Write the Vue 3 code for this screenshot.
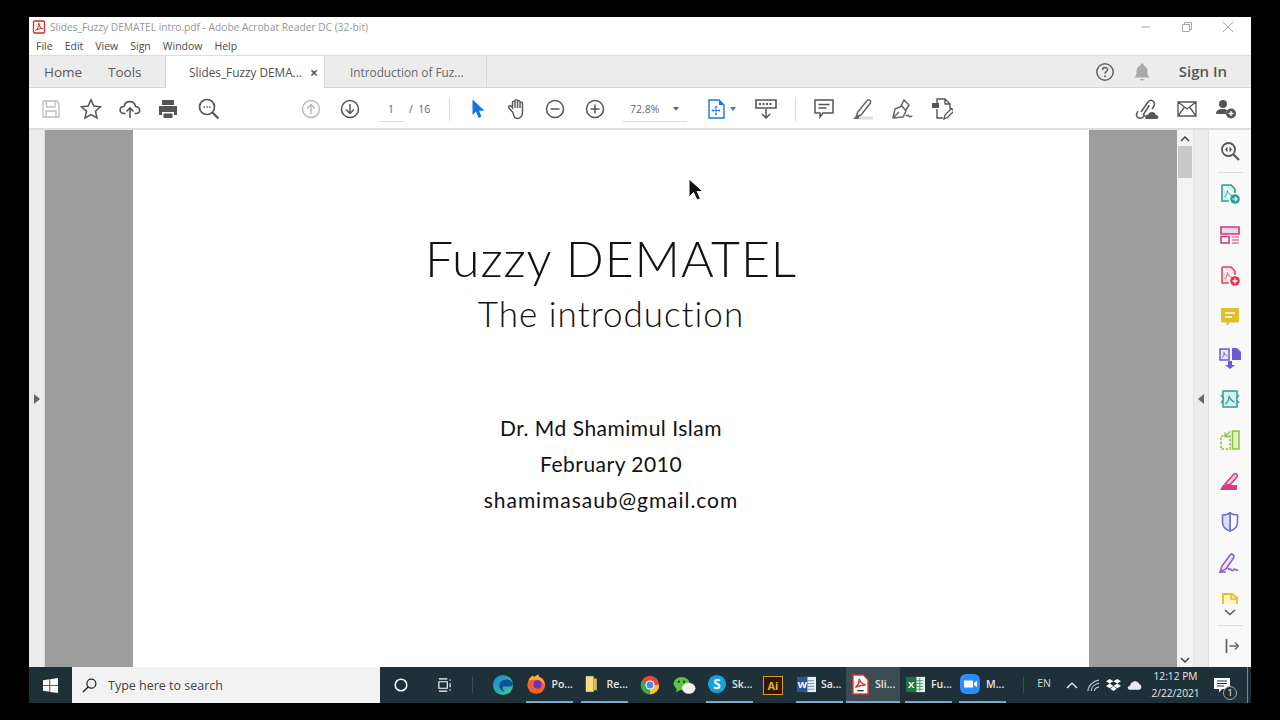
<template>
  <div class="screen">
    <div class="window">
      <!-- title bar -->
      <div class="titlebar">
        <svg class="app-icon" viewBox="0 0 14 14" width="14" height="14">
          <rect x="1.5" y="1" width="11" height="12" rx="1" fill="#fff" stroke="#c8322c" stroke-width="1.3" />
          <path d="M3.5 10.5C6 9 7 6 6.6 3.6 6.4 2.8 7.6 3 7.4 4.4 7.2 6.5 8.5 8 10.6 8.6 8.5 8.4 5.5 9 3.5 10.5Z" fill="none" stroke="#c8322c" stroke-width="1" />
        </svg>
        <span class="title-text">Slides_Fuzzy DEMATEL intro.pdf - Adobe Acrobat Reader DC (32-bit)</span>
        <div class="win-controls">
          <svg viewBox="0 0 12 12" width="12" height="12"><path d="M1 6h9" stroke="#a8a8a8" fill="none" /></svg>
          <svg viewBox="0 0 12 12" width="12" height="12"><path d="M1.5 3.5h7v7h-7zM3.5 3.5v-2h7v7h-2" stroke="#a8a8a8" fill="none" /></svg>
          <svg viewBox="0 0 12 12" width="12" height="12"><path d="M1 1l10 10M11 1L1 11" stroke="#a8a8a8" fill="none" /></svg>
        </div>
      </div>

      <!-- menu -->
      <div class="menubar">
        <span v-for="m in menus" :key="m">{{ m }}</span>
      </div>

      <!-- tabs -->
      <div class="tabbar">
        <span class="tab-link home">Home</span>
        <span class="tab-link tools">Tools</span>
        <div class="tab active">
          <span>Slides_Fuzzy DEMA...</span>
          <span class="tab-close">×</span>
        </div>
        <div class="tab other"><span>Introduction of Fuz...</span></div>
        <div class="tab-right">
          <svg viewBox="0 0 20 20" width="20" height="20">
            <circle cx="10" cy="10" r="8.2" fill="none" stroke="#666" stroke-width="1.5" />
            <path d="M7.6 8c0-3.2 4.9-3.2 4.9-.2 0 1.9-2.5 1.8-2.5 3.9" fill="none" stroke="#666" stroke-width="1.5" />
            <circle cx="10" cy="14.2" r="1" fill="#666" />
          </svg>
          <svg class="bell" viewBox="0 0 18 20" width="18" height="20">
            <path d="M1.5 15.5c2-2 2-3.500 2-6.500 0-3 2-5 4-5.500C7.500 2 8 1.500 9 1.500s1.500.5 1.500 2c2 .5 4 2.500 4 5.500 0 3 0 4.500 2 6.500zM7 17h4c0 2-4 2-4 0z" fill="#a9a9a9" />
          </svg>
          <span class="signin">Sign In</span>
        </div>
      </div>

      <!-- toolbar -->
      <div class="toolbar">
        <svg class="tb save" viewBox="0 0 20 20" width="20" height="20">
          <path d="M2 2h14l2 2v14H2zM5.500 2v6h8.500V2M5 18v-6h10v6" fill="none" stroke="#bdbdbd" stroke-width="1.3" />
        </svg>
        <svg class="tb star" viewBox="0 0 22 22" width="22" height="22">
          <path d="M11 1.800l2.800 6.300 6.800.7-5.100 4.500 1.500 6.700L11 16.500l-6 3.500 1.500-6.700L1.400 8.800l6.800-.7z" fill="none" stroke="#555" stroke-width="1.500" />
        </svg>
        <svg class="tb cloud" viewBox="0 0 22 20" width="22" height="20">
          <path d="M6.500 14.500H5.500C-.5 14.500 0 7.500 5 7.500 6.500 1 15.500 1 16.500 7.500c5 .2 6 7 .5 7h-1.500M11 19V9M7.500 12.500L11 9l3.500 3.500" fill="none" stroke="#555" stroke-width="1.600" />
        </svg>
        <svg class="tb print" viewBox="0 0 20 20" width="20" height="20">
          <path d="M4 1h12v5H4zM1 7h18v9h-3v-3H4v3H1zM5.500 14.500h9V19h-9z" fill="#555" />
        </svg>
        <svg class="tb find" viewBox="0 0 22 22" width="22" height="22">
          <circle cx="9" cy="9" r="7.500" fill="none" stroke="#555" stroke-width="1.700" />
          <path d="M14.500 14.500l6 6" stroke="#555" stroke-width="2.200" />
          <path d="M5.500 9h1.500M8.300 9h1.500M11 9h1.500" stroke="#555" stroke-width="1.400" />
        </svg>
        <svg class="tb page-up" viewBox="0 0 20 20" width="20" height="20">
          <circle cx="10" cy="10" r="8.500" fill="none" stroke="#bbb" stroke-width="1.500" />
          <path d="M10 15V5.500M6 9.500l4-4 4 4" fill="none" stroke="#bbb" stroke-width="1.500" />
        </svg>
        <svg class="tb page-down" viewBox="0 0 20 20" width="20" height="20">
          <circle cx="10" cy="10" r="8.500" fill="none" stroke="#555" stroke-width="1.500" />
          <path d="M10 5v9.500M6 10.500l4 4 4-4" fill="none" stroke="#555" stroke-width="1.500" />
        </svg>
        <div class="page-num"><span class="cur">1</span><span class="total">/&nbsp;&nbsp;16</span></div>
        <div class="sep sep1"></div>
        <svg class="tb pointer" viewBox="0 0 14 20" width="14" height="20">
          <path d="M1.500 .5v15.500l3.500-3.500 2.500 6.500 3-1.200-2.500-6H13.500z" fill="#1473e6" />
        </svg>
        <svg class="tb hand" viewBox="0 0 20 22" width="20" height="22">
          <path d="M5.500 14L2 10c-1.200-1.500.8-3 2-1.700l1.500 1.700V4.500c0-1.800 2.500-1.800 2.500 0V3c0-1.800 2.500-1.800 2.500 0v1c0-1.800 2.500-1.800 2.500 0v1.500c0-1.800 2.500-1.800 2.500 0V14c0 4-2 6.500-5.500 6.500S7.500 18 5.500 14zM8 4.500V10M10.500 3v7M13 4v6" fill="none" stroke="#555" stroke-width="1.400" />
        </svg>
        <svg class="tb zoom-out" viewBox="0 0 20 20" width="20" height="20">
          <circle cx="10" cy="10" r="8.500" fill="none" stroke="#555" stroke-width="1.500" />
          <path d="M5.500 10h9" stroke="#555" stroke-width="1.500" />
        </svg>
        <svg class="tb zoom-in" viewBox="0 0 20 20" width="20" height="20">
          <circle cx="10" cy="10" r="8.500" fill="none" stroke="#555" stroke-width="1.500" />
          <path d="M5.500 10h9M10 5.500v9" stroke="#555" stroke-width="1.500" />
        </svg>
        <div class="zoom-box"><span>72.8%</span><i class="caret"></i></div>
        <svg class="tb fit" viewBox="0 0 17 20" width="17" height="20">
          <path d="M1 1h10l5 5v13H1z" fill="#fff" stroke="#1473e6" stroke-width="1.400" />
          <path d="M11 1v5h5z" fill="#1473e6" />
          <path d="M8 7v9M4 11.500h8M6.800 8.500L8 7l1.200 1.500M6.800 14.500L8 16l1.200-1.500M5.300 10.200L4 11.500l1.300 1.300M10.700 10.200l1.300 1.300-1.300 1.300" fill="none" stroke="#1473e6" stroke-width=".9" />
        </svg>
        <i class="caret blue"></i>
        <svg class="tb scroll-mode" viewBox="0 0 22 20" width="22" height="20">
          <path d="M1 1h20v8H1z" fill="none" stroke="#555" stroke-width="1.600" />
          <path d="M4 5h14" stroke="#555" stroke-width="2" stroke-dasharray="2 1.500" />
          <path d="M11 10v9M7 15l4 4 4-4" fill="none" stroke="#555" stroke-width="1.500" />
        </svg>
        <div class="sep sep2"></div>
        <svg class="tb comment" viewBox="0 0 20 20" width="20" height="20">
          <path d="M1 1h18v13H9l-3 4v-4H1zM4.500 5.500h11M4.500 9h8" fill="none" stroke="#555" stroke-width="1.500" />
        </svg>
        <svg class="tb highlight" viewBox="0 0 22 22" width="22" height="22">
          <path d="M6 20h15" stroke="#ddd" stroke-width="3" />
          <path d="M5.500 14.500L15.500 2c1.500-1 4 1 3 3L9 17l-4.500 1z" fill="none" stroke="#666" stroke-width="1.500" />
          <path d="M1 21l3.500-3.500h3.500l-1.500 3.500z" fill="#666" />
        </svg>
        <svg class="tb sign-pen" viewBox="0 0 22 22" width="22" height="22">
          <path d="M2 20l2-9 7-3 4 5-3 6zM2 20l6-6M10 8l3-6 5 5-3 5M15 17c1 2 2-1 3 1s2-1 3 1" fill="none" stroke="#666" stroke-width="1.500" />
        </svg>
        <svg class="tb more-tools" viewBox="0 0 22 22" width="22" height="22">
          <path d="M6 5V1h8l5 5v5M14 1v5h5M6 11v9h6" fill="none" stroke="#555" stroke-width="1.400" />
          <path d="M1 5h7v5H1z" fill="#555" />
          <path d="M13 21l1-4 6.500-6.500 2.500 2.500-6.500 6.500z" fill="#fff" stroke="#555" stroke-width="1.300" />
        </svg>
        <div class="toolbar-right">
          <svg viewBox="0 0 24 22" width="24" height="22">
            <path d="M3 13l-1 2c-2 4 3 7 6 4l2-2M13 9l1-2M6 14L13 4c3-4 8 0 6 4l-2 3M8 17l6-9" fill="none" stroke="#555" stroke-width="1.500" />
            <path d="M11 21c-2-2 0-5 2-4 1-4 7-4 8 0 3 0 3 4 1 4z" fill="#555" />
          </svg>
          <svg viewBox="0 0 20 16" width="20" height="16">
            <path d="M1 1h18v14H1zM1 1l9 7 9-7M1 15l6.500-9M19 15l-6.500-9" fill="none" stroke="#555" stroke-width="1.300" />
          </svg>
          <svg viewBox="0 0 22 20" width="22" height="20">
            <circle cx="8" cy="5" r="4" fill="#555" />
            <path d="M1 15c0-4 3-5 7-5 2 0 3 .5 4 1-1 2-1 3-1 4z" fill="#555" />
            <circle cx="16" cy="14.500" r="5" fill="#555" />
            <path d="M13.500 14.500h5M16 12v5" stroke="#fff" stroke-width="1.300" />
          </svg>
        </div>
      </div>

      <!-- document area -->
      <div class="doc-area">
        <div class="nav-strip"><i class="arrow right"></i></div>
        <div class="gray-col"></div>
        <div class="page">
          <h1>Fuzzy DEMATEL</h1>
          <h2>The introduction</h2>
          <p class="author">Dr. Md Shamimul Islam</p>
          <p>February 2010</p>
          <p class="email">shamimasaub@gmail.com</p>
        </div>
        <div class="gray-col"></div>
        <div class="scrollbar">
          <svg viewBox="0 0 10 6" width="10" height="6"><path d="M1 5l4-4 4 4" fill="none" stroke="#444" stroke-width="1.500" /></svg>
          <div class="thumb"></div>
          <svg class="down" viewBox="0 0 10 6" width="10" height="6"><path d="M1 1l4 4 4-4" fill="none" stroke="#444" stroke-width="1.500" /></svg>
        </div>
        <div class="collapse-col"><i class="arrow left"></i></div>
        <div class="rail">
          <svg class="rail-zoom" viewBox="0 0 20 20" width="20" height="20">
            <circle cx="8.500" cy="8.500" r="6.500" fill="none" stroke="#555" stroke-width="1.800" />
            <path d="M13.500 13.500l5.500 5.500" stroke="#555" stroke-width="2.200" />
            <path d="M7.500 5.500L5 8.500l2.500 3zM9.500 5.500l2.500 3-2.500 3z" fill="#555" />
          </svg>
          <div class="rail-line"></div>
          <div class="rail-icons">
            <svg viewBox="0 0 20 20" width="20" height="20">
              <path d="M2 1h9l4 4v4M2 1v16h7" fill="#d5efec" stroke="#2d9e92" stroke-width="1.600" />
              <path d="M4.500 13c2-1.500 3-4 2.800-6.500 1 3 2.500 4.500 5 5" fill="none" stroke="#2d9e92" />
              <circle cx="15" cy="15" r="4.800" fill="#2d9e92" />
              <path d="M12.500 15h4.500M15 13l2 2-2 2" fill="none" stroke="#fff" stroke-width="1.200" />
            </svg>
            <svg viewBox="0 0 20 18" width="20" height="18">
              <path d="M1 1h18v7H1z" fill="#f4d6e6" stroke="#d1367c" stroke-width="1.600" />
              <path d="M1 10.500h8v6.500H1z" fill="#fff" stroke="#d1367c" stroke-width="1.600" />
              <path d="M12 11h7M12 14h7M12 17h7" stroke="#d1367c" />
            </svg>
            <svg viewBox="0 0 20 20" width="20" height="20">
              <path d="M2 1h9l4 4v4M2 1v16h7" fill="#fbdfe2" stroke="#e0475e" stroke-width="1.600" />
              <path d="M4.500 13c2-1.500 3-4 2.800-6.500 1 3 2.500 4.500 5 5" fill="none" stroke="#e0475e" />
              <circle cx="15" cy="15" r="4.800" fill="#e0334c" />
              <path d="M12.500 15h5M15 12.500v5" stroke="#fff" stroke-width="1.300" />
            </svg>
            <svg viewBox="0 0 20 20" width="20" height="20">
              <path d="M2 1h16a1.500 1.500 0 0 1 1 1.500V14a1.500 1.500 0 0 1-1 1.500H10l-3.500 3.500v-3.500H2A1.500 1.500 0 0 1 1 14V2.500A1.500 1.500 0 0 1 2 1z" fill="#e0bf2b" />
              <path d="M5 6h10M5 10h7" stroke="#fff" stroke-width="1.500" />
            </svg>
            <svg viewBox="0 0 22 22" width="22" height="22">
              <path d="M1 2h9v11H1z" fill="#e9e6fb" stroke="#6a5ad8" stroke-width="1.500" />
              <path d="M3 10.500c1.500-1 2.500-3 2-5 .8 2 2 3 3.500 3.500" fill="none" stroke="#6a5ad8" />
              <path d="M13 1h5l4 4v8h-9z" fill="#6a5ad8" />
              <path d="M9 14h4v4h3l-5 4-5-4h3z" fill="#6a5ad8" />
            </svg>
            <svg viewBox="0 0 22 20" width="22" height="20">
              <path d="M4 2h14v16H4z" fill="#d5efec" stroke="#2d9e92" stroke-width="1.500" />
              <path d="M6.500 15c2.500-2 3.500-5 3.500-8 1 3.500 2.500 5 5.500 6" fill="none" stroke="#2d9e92" stroke-width="1.200" />
              <path d="M2 6l2.500 4L2 14M20 6l-2.500 4L20 14" fill="#f7f7f7" stroke="#2d9e92" stroke-width="1.300" />
            </svg>
            <svg viewBox="0 0 20 20" width="20" height="20">
              <path d="M12.500 1H19v18h-6.500z" fill="#e0f2c4" stroke="#8cc63f" stroke-width="1.600" />
              <path d="M1 6h9v13H1z" fill="none" stroke="#8cc63f" stroke-width="1.600" stroke-dasharray="2.500 1.500" />
              <path d="M10 1.500L5 6.500M5 2.500v4h4" fill="none" stroke="#8cc63f" stroke-width="1.500" />
            </svg>
            <svg viewBox="0 0 20 18" width="20" height="18">
              <path d="M0 18l3-5h14v5z" fill="#d83a84" />
              <path d="M5 12L14 2c1.500-1.500 4.500 1 3 3l-7 8z" fill="#f3c4da" stroke="#d83a84" stroke-width="1.500" />
            </svg>
            <svg viewBox="0 0 18 20" width="18" height="20">
              <path d="M9 1c2 1.500 5 2 7.500 2v7c0 5-4 8-7.500 9z" fill="#fff" stroke="#6a6ed8" stroke-width="1.600" />
              <path d="M9 1C7 2.500 4 3 1.500 3v7c0 5 4 8 7.500 9z" fill="#dadcf8" stroke="#6a6ed8" stroke-width="1.600" />
            </svg>
            <svg viewBox="0 0 22 20" width="22" height="20">
              <path d="M1 19l2-6 8-11c2-2 5 .5 3.500 3L7 16z" fill="#f0e6fb" stroke="#8e5cd9" stroke-width="1.600" />
              <path d="M1 19h6M9 15c1 3 2 0 3 1.500s2 1.500 3 0 2 1.500 4 .5" fill="none" stroke="#8e5cd9" stroke-width="1.600" />
            </svg>
          </div>
          <div class="rail-cut">
            <svg viewBox="0 0 16 12" width="16" height="12">
              <path d="M1 12V1h9l5 4v7" fill="#fdf3c0" stroke="#e5bd1f" stroke-width="1.800" />
              <path d="M9 1v5h6" fill="none" stroke="#e5bd1f" stroke-width="1.500" />
            </svg>
          </div>
          <svg class="rail-more" viewBox="0 0 12 7" width="12" height="7"><path d="M1 1l5 4.500L11 1" fill="none" stroke="#555" stroke-width="1.500" /></svg>
          <div class="rail-line bottom"></div>
          <svg class="rail-expand" viewBox="0 0 14 14" width="14" height="14">
            <path d="M1.500 0v14" stroke="#666" stroke-width="1.800" />
            <path d="M4.500 7h9M10 3.500L13.500 7 10 10.500" fill="none" stroke="#666" stroke-width="1.500" />
          </svg>
        </div>
        <!-- mouse pointer on top of the page -->
        <svg class="cursor" viewBox="0 0 16 24" width="16" height="24">
          <path d="M1 1v18l4.500-4.500L9 22l3.500-1.500L9 13.500h6z" fill="#111" stroke="#fff" stroke-width="1" />
        </svg>
      </div>
    </div>

    <!-- taskbar -->
    <div class="taskbar">
      <div class="start">
        <svg viewBox="0 0 16 16" width="15" height="15">
          <path d="M0 2.300l6.800-1v6.300H0zM7.700 1.200L16 0v7.600H7.700zM0 8.400h6.800v6.300L0 13.700zM7.700 8.400H16V16l-8.300-1.200z" fill="#fff" />
        </svg>
      </div>
      <div class="search">
        <svg viewBox="0 0 16 16" width="15" height="15">
          <circle cx="10" cy="6" r="4.800" fill="none" stroke="#222" stroke-width="1.300" />
          <path d="M6.500 9.500L1 15" stroke="#222" stroke-width="1.500" />
        </svg>
        <span>Type here to search</span>
      </div>
      <div class="task-cortana">
        <svg viewBox="0 0 14 14" width="14" height="14"><circle cx="7" cy="7" r="5.800" fill="none" stroke="#fff" stroke-width="1.500" /></svg>
      </div>
      <div class="task-view">
        <svg viewBox="0 0 16 14" width="15" height="14">
          <path d="M2 .5h9M2 13.500h9M2 3.500h9v7H2zM14 1v1.500M14 5v4.500M14 11.500V13" fill="none" stroke="#fff" stroke-width="1.200" />
        </svg>
      </div>
      <div class="task-sep apps-sep"></div>

      <div class="task edge">
        <svg viewBox="0 0 24 24" width="22" height="22">
          <defs>
            <linearGradient id="edgeGrad" x1="0" y1="0" x2="1" y2="1">
              <stop offset="0" stop-color="#1a86d8" />
              <stop offset="1" stop-color="#39d08a" />
            </linearGradient>
          </defs>
          <circle cx="12" cy="12" r="11" fill="url(#edgeGrad)" />
          <path d="M23 12c0-4-4-6-7-6-5 0-8 3-8 7 0 4 3 6 6 6-2-1-3-3-2-5 1-1 9 1 11-2z" fill="#124f9c" />
        </svg>
      </div>
      <div class="task open firefox">
        <svg viewBox="0 0 24 24" width="21" height="22">
          <circle cx="12" cy="13" r="10.500" fill="#f0612f" />
          <path d="M3 8c1-3 3-5 5-6 0 1 1 2 2 2 1-1 3-3 5-3-1 2 0 3 2 4 3 2 5 5 5 9-2-4-5-7-9-7-4 0-7 0-10 1z" fill="#fbb03b" />
          <circle cx="13.500" cy="12.500" r="4.800" fill="#6b2fc2" />
        </svg>
        <span>Po...</span>
      </div>
      <div class="task open files">
        <svg viewBox="0 0 16 22" width="13" height="20">
          <path d="M1 1h10v20H1z" fill="#f3dc82" />
          <path d="M11 4h4v15h-4z" fill="#d9b950" />
        </svg>
        <span>Re...</span>
      </div>
      <div class="task chrome">
        <svg viewBox="0 0 24 24" width="20" height="20">
          <circle cx="12" cy="12" r="11" fill="#e8483c" />
          <path d="M12 12L2.500 6.500A11 11 0 0 0 12 23z" fill="#3aa757" />
          <path d="M12 12h11a11 11 0 0 1-11 11z" fill="#f6c22d" />
          <circle cx="12" cy="12" r="5.500" fill="#fff" />
          <circle cx="12" cy="12" r="4.200" fill="#4a8ce8" />
        </svg>
      </div>
      <div class="task wechat">
        <svg viewBox="0 0 24 20" width="23" height="19">
          <ellipse cx="9" cy="8" rx="8.500" ry="7" fill="#5fc443" />
          <path d="M4 13l-1 4 5-2.500z" fill="#5fc443" />
          <ellipse cx="16.500" cy="13" rx="7" ry="5.800" fill="#f2f2f2" />
          <circle cx="6" cy="6" r="1.200" fill="#1f3138" />
          <circle cx="11.500" cy="6" r="1.200" fill="#1f3138" />
        </svg>
      </div>
      <div class="task open skype">
        <svg viewBox="0 0 22 22" width="20" height="20">
          <circle cx="11" cy="11" r="10" fill="#15a3e0" />
          <text x="11" y="16" text-anchor="middle" class="skype-s">S</text>
        </svg>
        <span>Sk...</span>
      </div>
      <div class="task ai">
        <div class="ai-box">Ai</div>
      </div>
      <div class="task open word">
        <svg viewBox="0 0 22 20" width="21" height="19">
          <path d="M9 2h12v16H9z" fill="#e8eef8" />
          <path d="M12 6h7M12 9h7M12 12h7M12 15h7" stroke="#6f8fc2" />
          <path d="M1 2h11v16H1z" fill="#2b579a" />
          <text x="6.500" y="14" text-anchor="middle" class="doc-letter">W</text>
        </svg>
        <span>Sa...</span>
      </div>
      <div class="task open current pdf">
        <svg viewBox="0 0 18 22" width="17" height="21">
          <path d="M1 1h11l5 5v15H1z" fill="#fff" />
          <path d="M1 1h11l5 5v15H1z" fill="none" stroke="#d63a34" stroke-width="1.500" />
          <path d="M3.500 14c3-2 4.500-5 4-9 1.500 4 3.500 6 7 6.500-4 0-7.500 1-11 2.500z" fill="none" stroke="#d63a34" stroke-width="1.600" />
          <path d="M5.500 17.500h7" stroke="#333" stroke-width="1.500" />
        </svg>
        <span>Sli...</span>
      </div>
      <div class="task open excel">
        <svg viewBox="0 0 22 20" width="21" height="19">
          <path d="M9 2h12v16H9z" fill="#e8f3ec" />
          <path d="M12 6h7M12 9h7M12 12h7M12 15h7M15.500 3v14" stroke="#3f9a68" />
          <path d="M1 2h11v16H1z" fill="#1f7244" />
          <text x="6.500" y="14" text-anchor="middle" class="doc-letter">X</text>
        </svg>
        <span>Fu...</span>
      </div>
      <div class="task open zoom-app">
        <svg viewBox="0 0 20 20" width="20" height="20">
          <rect x="0" y="0" width="20" height="20" rx="6" fill="#2d8cff" />
          <path d="M4 6.500h8a1 1 0 0 1 1 1v6H5a1 1 0 0 1-1-1zM14 9l3-2.300v6.600L14 11z" fill="#fff" />
        </svg>
        <span>M...</span>
      </div>

      <div class="tray">
        <div class="task-sep tray-sep"></div>
        <span class="lang">EN</span>
        <svg class="tray-up" viewBox="0 0 12 7" width="12" height="7"><path d="M1 6l5-5 5 5" fill="none" stroke="#fff" stroke-width="1.200" /></svg>
        <svg class="tray-wifi" viewBox="0 0 14 14" width="13" height="13">
          <path d="M1 13C1 7 7 2 13 1M4.500 13c0-4 3.500-7.500 8.500-8.500M8 13c0-2 2-4 5-4.500" fill="none" stroke="#d5dade" stroke-width="1.100" />
        </svg>
        <svg class="tray-dropbox" viewBox="0 0 16 14" width="15" height="14">
          <path d="M4 .5L8 3 4 5.500 0 3zM12 .5L16 3l-4 2.500L8 3zM4 5.500L8 8l-4 2.500L0 8zM12 5.500L16 8l-4 2.500L8 8zM4.500 11l3.500-2.300 3.500 2.300L8 13.500z" fill="#fff" />
        </svg>
        <svg class="tray-cloud" viewBox="0 0 16 10" width="15" height="10">
          <path d="M3 10C0 10 0 6 3 6c1-5 8-7 10-2 3 .5 3 6 0 6z" fill="#e8eaec" />
        </svg>
        <div class="clock"><span>12:12 PM</span><span>2/22/2021</span></div>
        <div class="notify">
          <svg viewBox="0 0 16 15" width="16" height="15">
            <path d="M0 0h16v11H8l-3 3.500V11H0z" fill="#fff" />
            <path d="M3 3h10M3 5.500h10M3 8h7" stroke="#1f3138" />
          </svg>
          <span class="badge">1</span>
        </div>
        <div class="show-desktop"></div>
      </div>
    </div>
  </div>
</template>

<script setup>
const menus = ["File", "Edit", "View", "Sign", "Window", "Help"];
</script>

<style>
html,
body {
  margin: 0;
  background: #000;
}
</style>

<style scoped>
* {
  box-sizing: border-box;
}

.screen {
  width: 1222px;
  height: 686px;
  margin: 17px 0 0 29px;
  display: flex;
  flex-direction: column;
  font-family: "Open Sans", "Liberation Sans", sans-serif;
  color: #444;
  overflow: hidden;
}

.window {
  flex: 1;
  min-height: 0;
  display: flex;
  flex-direction: column;
  background: #fff;
}

/* title bar */
.titlebar {
  height: 20px;
  flex: none;
  display: flex;
  align-items: center;
  padding: 0 17px 0 3px;
  background: #fff;
}

.app-icon {
  margin-right: 4px;
}

.title-text {
  font-size: 10.2px;
  color: #969696;
}

.win-controls {
  margin-left: auto;
  display: flex;
  gap: 29px;
}

/* menu */
.menubar {
  height: 18px;
  flex: none;
  display: flex;
  align-items: center;
  gap: 12px;
  padding-left: 7px;
  font-size: 10.5px;
  color: #4a4a4a;
  background: #fff;
}

/* tabs */
.tabbar {
  height: 33px;
  flex: none;
  display: flex;
  align-items: stretch;
  background: #ececec;
  border-top: 1px solid #dcdcdc;
  border-bottom: 1px solid #d4d4d4;
  font-size: 11.8px;
}

.tab-link {
  display: flex;
  align-items: center;
  font-size: 13.5px;
  color: #5a5a5a;
}

.home {
  margin-left: 15px;
  width: 64px;
}

.tools {
  width: 57px;
}

.tab {
  display: flex;
  align-items: center;
  color: #555;
}

.tab.active {
  width: 160px;
  padding-left: 23px;
  background: #fff;
  border-left: 1px solid #d4d4d4;
  border-right: 1px solid #d4d4d4;
  margin-bottom: -1px;
  color: #505050;
}

.tab-close {
  margin-left: 8px;
  font-size: 14px;
  font-weight: 700;
  color: #555;
}

.tab.other {
  width: 162px;
  padding-left: 25px;
  border-right: 1px solid #d8d8d8;
  color: #666;
}

.tab-right {
  margin-left: auto;
  display: flex;
  align-items: center;
  padding-right: 24px;
}

.bell {
  margin-left: 18px;
}

.signin {
  margin-left: 28px;
  margin-top: -2px;
  font-size: 15px;
  font-weight: 600;
  color: #555;
}

/* toolbar */
.toolbar {
  height: 42px;
  flex: none;
  display: flex;
  align-items: center;
  background: #fff;
  border-bottom: 2px solid #dedede;
  padding: 2px 0 0 12px;
}

.tb {
  flex: none;
}

.star {
  margin-left: 19px;
}

.cloud {
  margin-left: 17px;
}

.print {
  margin-left: 17px;
}

.find {
  margin-left: 20px;
}

.page-up {
  margin-left: 81px;
}

.page-down {
  margin-left: 19px;
}

.page-num {
  width: 71px;
  margin-left: 18px;
  display: flex;
  align-items: center;
  font-size: 10.5px;
  color: #666;
}

.cur {
  width: 26px;
  text-align: center;
  padding-bottom: 5px;
  padding-top: 5px;
  border-bottom: 1px solid #ddd;
  margin-right: 5px;
}

.sep {
  width: 1px;
  height: 24px;
  background: #dcdcdc;
  flex: none;
}

.pointer {
  margin-left: 21px;
}

.hand {
  margin-left: 22px;
}

.zoom-out {
  margin-left: 18px;
}

.zoom-in {
  margin-left: 20px;
}

.zoom-box {
  width: 64px;
  margin-left: 18px;
  height: 25px;
  display: flex;
  align-items: center;
  padding-left: 7px;
  border-bottom: 1px solid #ddd;
  font-size: 10.5px;
  color: #666;
}

.caret {
  display: block;
  width: 0;
  height: 0;
  border-left: 3.5px solid transparent;
  border-right: 3.5px solid transparent;
  border-top: 4px solid #666;
}

.zoom-box .caret {
  margin-left: 14px;
}

.caret.blue {
  border-top-color: #3a7cc8;
  margin-left: 5px;
}

.fit {
  margin-left: 21px;
}

.scroll-mode {
  margin-left: 19px;
}

.sep2 {
  margin-left: 18px;
}

.comment {
  margin-left: 18px;
}

.highlight {
  margin-left: 18px;
}

.sign-pen {
  margin-left: 17px;
}

.more-tools {
  margin-left: 18px;
}

.toolbar-right {
  margin-left: auto;
  display: flex;
  align-items: center;
  gap: 18px;
  padding-right: 14px;
}

/* document area */
.doc-area {
  position: relative;
  flex: 1;
  min-height: 0;
  display: grid;
  grid-template-columns: 16px 88px 956px 88px 16px 16px 42px;
  background: #9d9d9d;
}

.nav-strip {
  background: #ececec;
  border-right: 1px solid #dcdcdc;
  display: flex;
  align-items: center;
  justify-content: center;
}

.gray-col {
  background: #9d9d9d;
}

.arrow {
  display: block;
  width: 0;
  height: 0;
  border-top: 5px solid transparent;
  border-bottom: 5px solid transparent;
}

.arrow.right {
  border-left: 6px solid #666;
}

.arrow.left {
  border-right: 6px solid #666;
}

.page {
  background: #fff;
  display: flex;
  flex-direction: column;
  align-items: center;
  color: #111;
  font-family: Lato, "Open Sans", sans-serif;
}

.page h1 {
  margin: 96px 0 0;
  font-size: 50px;
  line-height: 65px;
  font-weight: 300;
  letter-spacing: 0.9px;
}

.page h2 {
  margin: 0;
  font-size: 35px;
  line-height: 44px;
  font-weight: 300;
  letter-spacing: 1px;
}

.page p {
  margin: 0;
  font-size: 21px;
  line-height: 36px;
  font-weight: 400;
  letter-spacing: 0.5px;
}

.page .author {
  margin-top: 75px;
}

.page .email {
  letter-spacing: 0.95px;
}

.scrollbar {
  background: #f3f3f3;
  display: flex;
  flex-direction: column;
  align-items: center;
  padding-top: 6px;
  padding-bottom: 4px;
}

.thumb {
  width: 14px;
  height: 32px;
  margin-top: 4px;
  background: #c8c8c8;
}

.scrollbar .down {
  margin-top: auto;
}

.collapse-col {
  background: #ececec;
  border-right: 1px solid #dedede;
  border-left: 1px solid #e4e4e4;
  display: flex;
  align-items: center;
  justify-content: center;
}

.rail {
  background: #f9f9f9;
  display: flex;
  flex-direction: column;
  align-items: center;
  padding-top: 11px;
}

.rail-line {
  flex: none;
  width: 25px;
  height: 1px;
  background: #dcdcdc;
  margin-top: 11px;
}

.rail-icons {
  display: grid;
  grid-auto-rows: 41px;
  justify-items: center;
  align-items: center;
}

.rail-cut {
  margin-top: 10px;
  height: 11px;
  overflow: hidden;
}

.rail-cut svg {
  display: block;
}

.rail-more {
  margin-top: 5px;
}

.rail-line.bottom {
  margin-top: 9px;
}

.rail-expand {
  margin-top: 13px;
  margin-left: 4px;
}

.cursor {
  position: absolute;
  left: 659px;
  top: 48px;
}

/* taskbar */
.taskbar {
  height: 36px;
  flex: none;
  display: flex;
  align-items: center;
  background: #1f3138;
  color: #e8e8e8;
  font-family: "Open Sans", "Liberation Sans", sans-serif;
}

.start {
  width: 43px;
  height: 100%;
  display: flex;
  align-items: center;
  justify-content: center;
}

.search {
  width: 308px;
  height: 100%;
  display: flex;
  align-items: center;
  padding-left: 10px;
  gap: 11px;
  background: #f2f2f2;
  color: #444;
  font-size: 12.5px;
}

.task-cortana {
  width: 42px;
  display: flex;
  justify-content: center;
}

.task-view {
  width: 44px;
  display: flex;
  justify-content: center;
}

.task-sep {
  flex: none;
  width: 1px;
  height: 16px;
  background: #3d4e55;
}

.apps-sep {
  margin-left: 6px;
}

.task {
  height: 100%;
  display: flex;
  align-items: center;
  justify-content: flex-start;
  gap: 5px;
  font-size: 10.5px;
  font-weight: 600;
  color: #e4e8ea;
  flex: none;
}

.task.open {
  border-bottom: 2px solid #7fa8cc;
}

.task.current {
  background: #3c4c53;
}

.edge {
  width: 36px;
  margin-left: 12px;
  justify-content: center;
}

.firefox {
  width: 47px;
  margin-left: 5px;
}

.files {
  width: 47px;
  margin-left: 8px;
  padding-left: 4px;
  gap: 9px;
}

.chrome {
  width: 36px;
  margin-left: 4px;
  justify-content: center;
}

.wechat {
  width: 32px;
  justify-content: center;
}

.skype {
  width: 47px;
  margin-left: 6px;
  padding-left: 1px;
}

.ai {
  width: 36px;
  margin-left: 2px;
  justify-content: center;
}

.ai-box {
  width: 20px;
  height: 19px;
  background: #2f1a00;
  border: 1.5px solid #e09a2b;
  color: #f0a83a;
  font-size: 11px;
  font-weight: 700;
  display: flex;
  align-items: center;
  justify-content: center;
}

.word {
  width: 47px;
  margin-left: 5px;
  gap: 4px;
}

.pdf {
  width: 54px;
  margin-left: 3px;
  padding-left: 6px;
  gap: 6px;
}

.excel {
  width: 47px;
  margin-left: 5px;
}

.zoom-app {
  width: 47px;
  margin-left: 7px;
  padding-left: 1px;
  gap: 6px;
}

.skype-s {
  font-size: 15px;
  font-weight: 700;
  fill: #fff;
  font-family: "Open Sans", sans-serif;
}

.doc-letter {
  font-size: 10px;
  font-weight: 700;
  fill: #fff;
  font-family: "Open Sans", sans-serif;
}

.tray {
  margin-left: auto;
  display: flex;
  align-items: center;
  height: 100%;
}

.tray-sep {
  margin-right: 13px;
}

.lang {
  font-size: 10.5px;
  margin-top: -4px;
  color: #d5dade;
}

.tray-up {
  margin-left: 15px;
}

.tray-wifi {
  margin-left: 9px;
}

.tray-dropbox {
  margin-left: 6px;
}

.tray-cloud {
  margin-left: 6px;
}

.clock {
  margin-left: 6px;
  width: 55px;
  display: flex;
  flex-direction: column;
  align-items: center;
  font-size: 10.2px;
  line-height: 17px;
  color: #e6e9eb;
}

.notify {
  position: relative;
  margin-left: 11px;
  display: flex;
}

.badge {
  position: absolute;
  right: -7px;
  bottom: -7px;
  width: 14px;
  height: 14px;
  border-radius: 50%;
  border: 1px solid #aaa;
  background: #1f3138;
  color: #fff;
  font-size: 9px;
  display: flex;
  align-items: center;
  justify-content: center;
}

.show-desktop {
  width: 21px;
  height: 100%;
  background: linear-gradient(to right, transparent 17px, #7a868b 17px, #7a868b 18px, transparent 18px);
}
</style>
